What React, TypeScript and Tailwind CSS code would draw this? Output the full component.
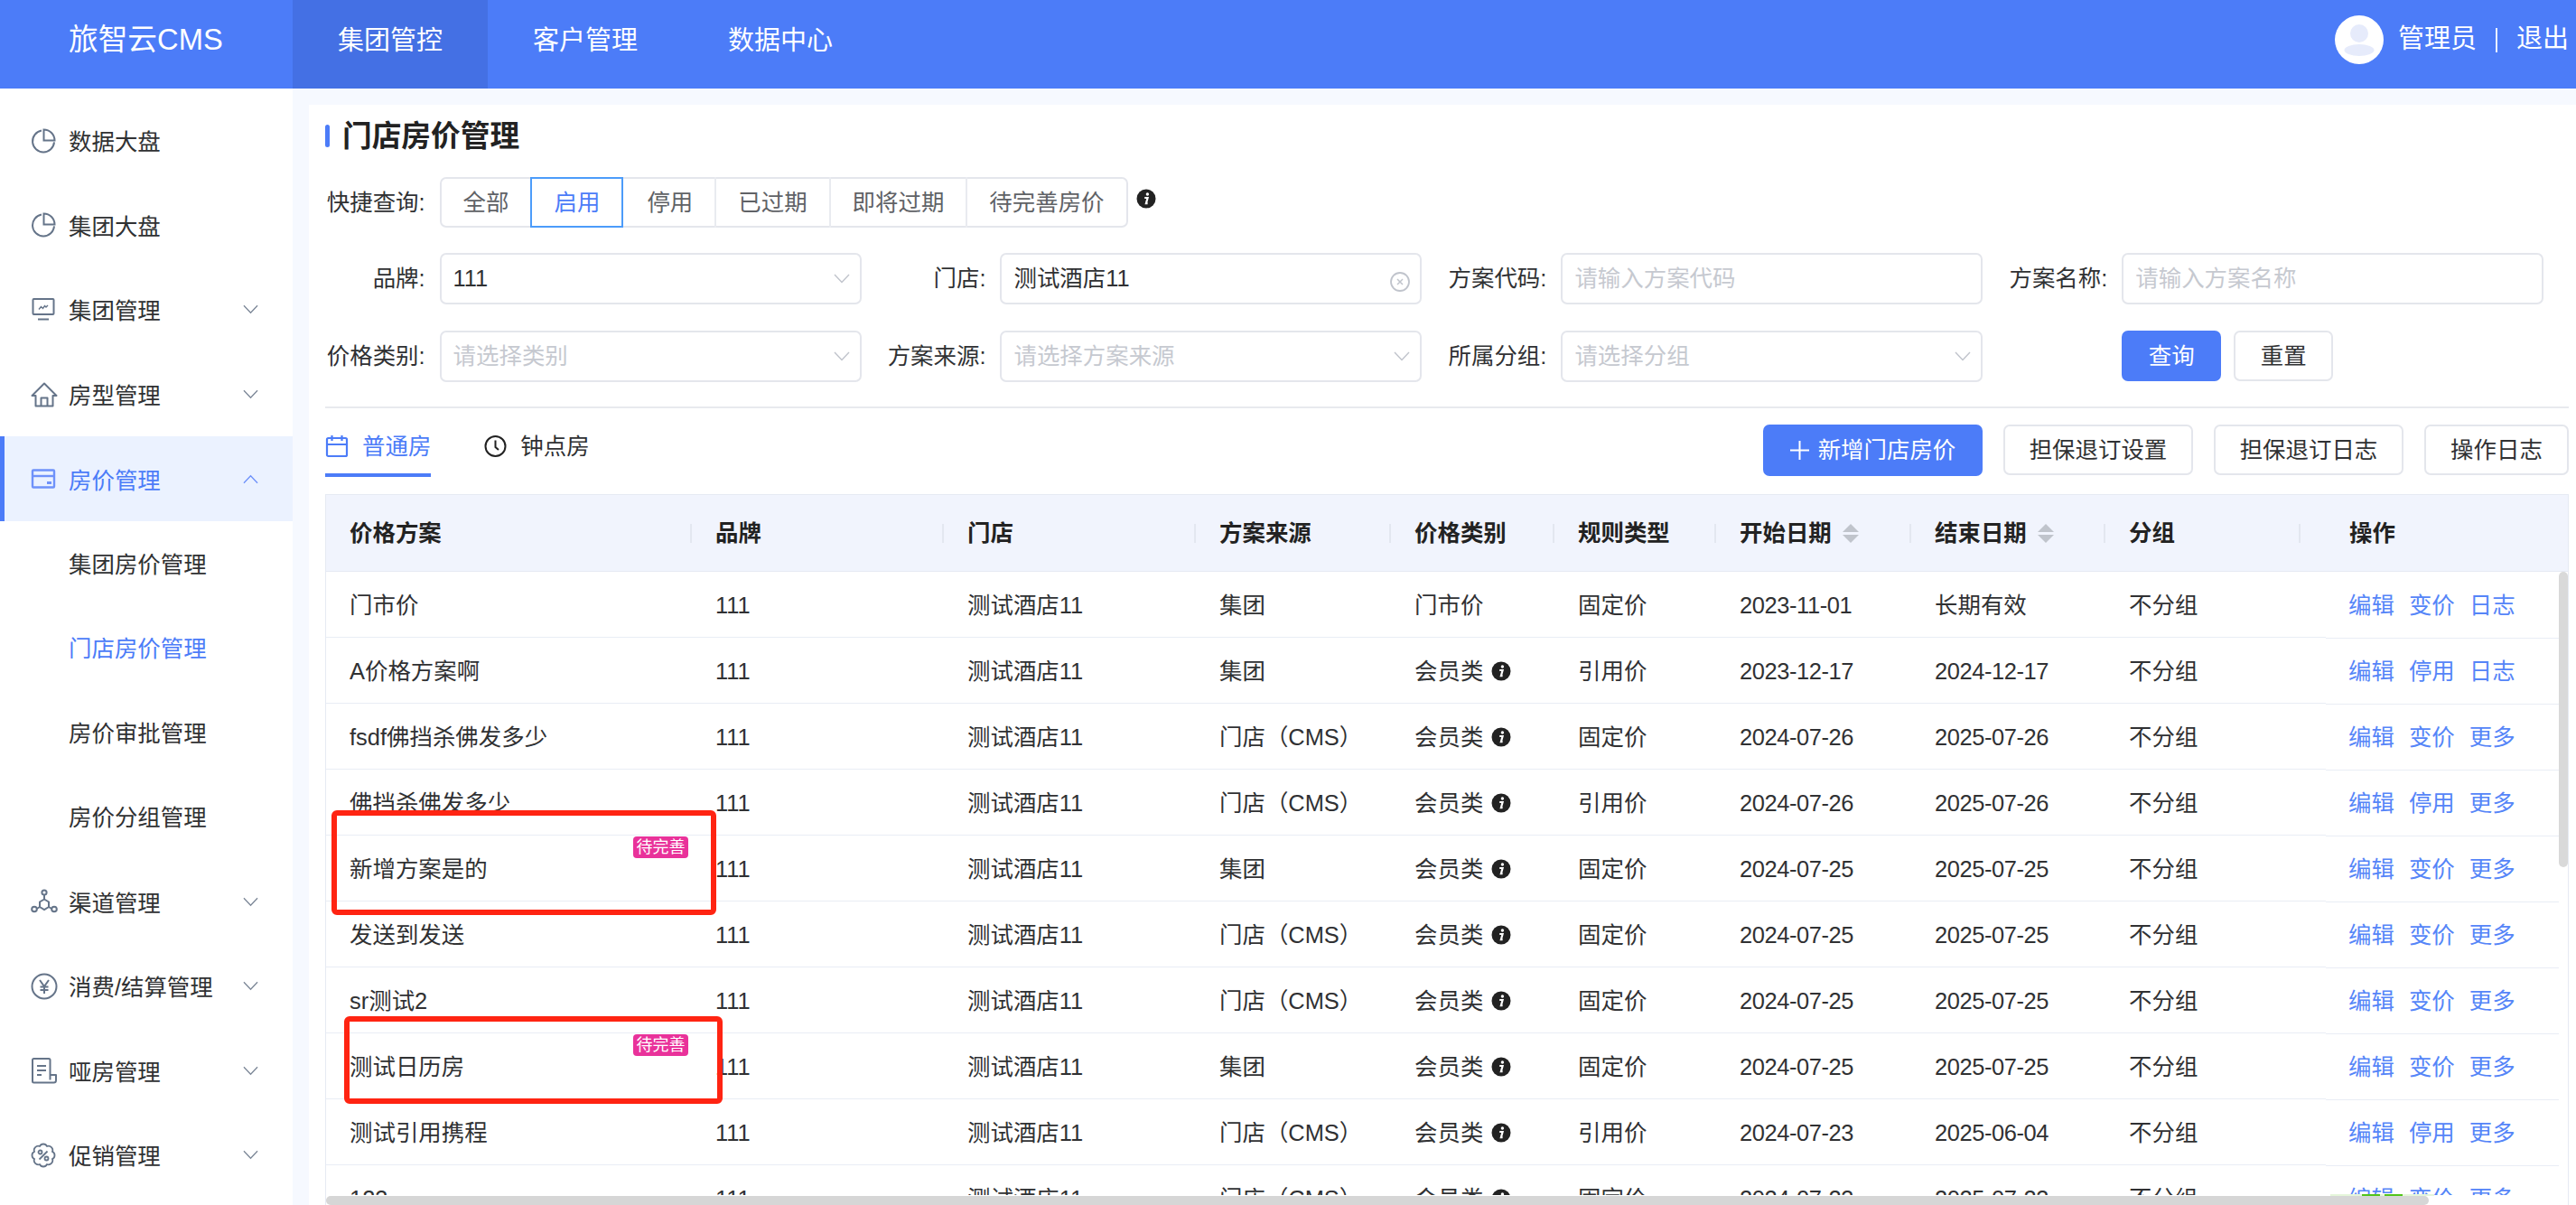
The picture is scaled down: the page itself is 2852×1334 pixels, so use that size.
import type { ReactNode } from "react";

// sidebar + header icons
const ink = "#657489";

function Pie() {
  return (
    <svg width="28" height="28" viewBox="0 0 28 28" fill="none" stroke={ink} strokeWidth="2">
      <path d="M12 2.6A12 12 0 1 0 26 15.4" />
      <path d="M14.5 1.5A12 12 0 0 1 26.5 13.5H14.5Z" />
    </svg>
  );
}

function Monitor() {
  return (
    <svg width="28" height="28" viewBox="0 0 28 28" fill="none" stroke={ink} strokeWidth="2">
      <rect x="2.5" y="2" width="23" height="17" rx="1" />
      <path d="M8 24.5h12" />
      <path d="M9 13.5l2.5-3 2 2 2-3 1.5 1.5 2-2" strokeWidth="1.4" />
    </svg>
  );
}

function HomeIcon() {
  return (
    <svg width="30" height="28" viewBox="0 0 30 28" fill="none" stroke={ink} strokeWidth="2" strokeLinejoin="round">
      <path d="M15 1.5L1.5 15H5.5V26.5H24.5V15H28.5Z" />
      <path d="M11.5 26.5V17.5H18.5V26.5" />
    </svg>
  );
}

function CardIcon() {
  return (
    <svg width="28" height="24" viewBox="0 0 28 24" fill="none" stroke="#6f92fa" strokeWidth="2.4">
      <rect x="2" y="2.5" width="24" height="19" rx="1" />
      <path d="M2 9h24" />
      <path d="M18 16.5h5" strokeWidth="3" />
    </svg>
  );
}

function Channel() {
  return (
    <svg width="30" height="28" viewBox="0 0 30 28" fill="none" stroke={ink} strokeWidth="2">
      <circle cx="15" cy="4" r="2.6" />
      <circle cx="4" cy="22.5" r="2.8" />
      <circle cx="26" cy="22.5" r="2.8" />
      <path d="M15 6.6V11.5L20 14.5V20L15 23L10 20V14.5L15 11.5" />
      <path d="M6.8 22L10 20M23.2 22L20 20" />
    </svg>
  );
}

function Yen() {
  return (
    <svg width="30" height="30" viewBox="0 0 30 30" fill="none" stroke={ink} strokeWidth="2">
      <circle cx="15" cy="15" r="13.5" />
      <path d="M10 8l5 7 5-7M15 15v8M10.5 15.5h9M10.5 19h9" />
    </svg>
  );
}

function Doc() {
  return (
    <svg width="30" height="30" viewBox="0 0 30 30" fill="none" stroke={ink} strokeWidth="2" strokeLinejoin="round">
      <path d="M21.5 23V3.5A1.5 1.5 0 0 0 20 2H3.5A1.5 1.5 0 0 0 2 3.5V27A1.5 1.5 0 0 0 3.5 28.5H25.5C27 28.5 28 27.5 28 26V20H21.5V25.5" />
      <path d="M7 10h10M7 15h10M7 20h5" />
    </svg>
  );
}

function Promo() {
  // scalloped badge
  const c = 14;
  const pts = Array.from({ length: 8 }, (_, i) => {
    const a = (Math.PI / 4) * i + Math.PI / 8;
    return [c + 10.8 * Math.cos(a), c + 10.8 * Math.sin(a)];
  });
  const d =
    `M${pts[0][0].toFixed(1)} ${pts[0][1].toFixed(1)}` +
    pts
      .slice(1)
      .concat([pts[0]])
      .map((p) => `A4.6 4.6 0 0 1 ${p[0].toFixed(1)} ${p[1].toFixed(1)}`)
      .join("") +
    "Z";
  return (
    <svg width="28" height="28" viewBox="0 0 28 28" fill="none" stroke={ink} strokeWidth="1.8">
      <path d={d} />
      <circle cx="10.5" cy="10.5" r="2" />
      <circle cx="17.5" cy="17.5" r="2" />
      <path d="M18.5 9.5L9.5 18.5" />
    </svg>
  );
}

function Chevron({ up, color = "#7d8898", w = 18 }: { up?: boolean; color?: string; w?: number }) {
  return (
    <svg width={w} height="11" viewBox="0 0 18 11" fill="none" stroke={color} strokeWidth="1.4">
      <path d={up ? "M1 10L9 1.5L17 10" : "M1 1L9 9.5L17 1"} />
    </svg>
  );
}

function Info() {
  return (
    <svg width="22" height="22" viewBox="0 0 22 22" className="shrink-0">
      <circle cx="11" cy="11" r="10.5" fill="#222" />
      <circle cx="12.4" cy="6" r="1.7" fill="#fff" />
      <path d="M9.2 10H12.6L10.9 16.2H12.6" fill="none" stroke="#fff" strokeWidth="2.2" />
    </svg>
  );
}

function Sort() {
  return (
    <svg width="18" height="21" viewBox="0 0 18 21" className="ml-[12px] shrink-0" fill="#c0c4cc">
      <path d="M9 0L18 9H0Z" />
      <path d="M0 12H18L9 21Z" />
    </svg>
  );
}

type MenuItem = { label: string; icon?: ReactNode; arrow?: "down" | "up"; active?: boolean; sub?: boolean };

const menu: MenuItem[] = [
  { label: "数据大盘", icon: <Pie /> },
  { label: "集团大盘", icon: <Pie /> },
  { label: "集团管理", icon: <Monitor />, arrow: "down" },
  { label: "房型管理", icon: <HomeIcon />, arrow: "down" },
  { label: "房价管理", icon: <CardIcon />, arrow: "up", active: true },
  { label: "集团房价管理", sub: true },
  { label: "门店房价管理", sub: true, active: true },
  { label: "房价审批管理", sub: true },
  { label: "房价分组管理", sub: true },
  { label: "渠道管理", icon: <Channel />, arrow: "down" },
  { label: "消费/结算管理", icon: <Yen />, arrow: "down" },
  { label: "哑房管理", icon: <Doc />, arrow: "down" },
  { label: "促销管理", icon: <Promo />, arrow: "down" },
];

function Sidebar() {
  return (
    <aside className="w-[324px] shrink-0 bg-white pt-[11px]">
      {menu.map((m) => {
        if (m.sub) {
          return (
            <div
              key={m.label}
              className={`flex h-[93.6px] items-center pl-[76px] pt-[2px] ${m.active ? "text-[#4c7cf8]" : "text-[#303133]"}`}
            >
              {m.label}
            </div>
          );
        }
        return (
          <div
            key={m.label}
            className={`flex h-[93.6px] items-center pr-[38px] ${
              m.active ? "border-l-[5px] border-[#4c7cf8] bg-[#ebf2ff] pl-[29px] text-[#4c7cf8]" : "pl-[34px] text-[#303133]"
            }`}
          >
            <span className="flex w-[42px] shrink-0 justify-start">{m.icon}</span>
            <span className="flex-1 pt-[3px]">{m.label}</span>
            {m.arrow && <Chevron up={m.arrow === "up"} color={m.active ? "#6f92fa" : "#7d8898"} w={17} />}
          </div>
        );
      })}
    </aside>
  );
}

function Header() {
  return (
    <header className="flex h-[98px] shrink-0 bg-[#4c7cf8] text-white">
      <div className="flex w-[324px] items-center pb-[11px] pl-[76px] text-[32.7px]">旅智云CMS</div>
      <nav className="flex text-[29px]">
        <div className="flex w-[216px] items-center justify-center bg-[#4470e4] pb-[6px]">集团管控</div>
        <div className="flex w-[216px] items-center justify-center pb-[6px]">客户管理</div>
        <div className="flex w-[216px] items-center justify-center pb-[6px]">数据中心</div>
      </nav>
      <div className="ml-auto flex items-center pb-[10px] pr-[8px] text-[29px]">
        <svg width="54" height="54" viewBox="0 0 54 54" className="mr-[16px]">
          <circle cx="27" cy="27" r="27" fill="#fff" />
          <ellipse cx="27" cy="20" rx="10" ry="10" fill="#e6ebfb" />
          <ellipse cx="27" cy="38.5" rx="16.5" ry="6.5" fill="#e6ebfb" />
        </svg>
        <span>管理员</span>
        <span className="mx-[21px] h-[27px] w-[2px] bg-white/90" />
        <span>退出</span>
      </div>
    </header>
  );
}

const quick = ["全部", "启用", "停用", "已过期", "即将过期", "待完善房价"];

function QuickFilter() {
  return (
    <div className="mt-[28px] flex h-[56px] items-center">
      <div className="w-[110.6px] shrink-0 text-right text-[#303133]">快捷查询:</div>
      <div className="ml-[16px] flex h-full rounded-[7px] border-2 border-[#e4e6ec]">
        {quick.map((q, i) => (
          <div
            key={q}
            className={`-my-[2px] flex items-center px-[24px] ${
              q === "启用"
                ? "border-2 border-[#4c9cfa] text-[#4c7cf8]"
                : `text-[#606266] ${i > 2 ? "border-l-2 border-[#e9ebf0]" : i === 2 ? "border-l-2 border-transparent" : ""}`
            }`}
          >
            {q}
          </div>
        ))}
      </div>
      <span className="-mt-[8px] ml-[9px]">
        <Info />
      </span>
    </div>
  );
}

function Field({
  label,
  value,
  placeholder,
  icon,
}: {
  label: string;
  value?: string;
  placeholder?: string;
  icon?: "chevron" | "clear";
}) {
  return (
    <div className="flex h-[57px] w-[593.6px] shrink-0 items-center">
      <div className="w-[110.6px] shrink-0 text-right whitespace-nowrap text-[#303133]">{label}</div>
      <div className="ml-[16px] flex h-full flex-1 items-center justify-between rounded-[7px] border-2 border-[#e4e6ec] pl-[13px] pr-[11px]">
        {value ? <span className="text-[#303133]">{value}</span> : <span className="text-[#c6c9d0]">{placeholder}</span>}
        {icon === "chevron" && <Chevron color="#c0c4cc" />}
        {icon === "clear" && (
          <svg width="22" height="22" viewBox="0 0 22 22" fill="none" stroke="#c0c4cc" className="mt-[6px]">
            <circle cx="11" cy="11" r="10" strokeWidth="1.8" />
            <path d="M8 8l6 6M14 8l-6 6" strokeWidth="1.5" />
          </svg>
        )}
      </div>
    </div>
  );
}

function Filters() {
  return (
    <div className="mt-[28px] flex flex-col gap-[29px]">
      <div className="flex gap-[27.3px]">
        <Field label="品牌:" value="111" icon="chevron" />
        <Field label="门店:" value="测试酒店11" icon="clear" />
        <Field label="方案代码:" placeholder="请输入方案代码" />
        <Field label="方案名称:" placeholder="请输入方案名称" />
      </div>
      <div className="flex gap-[27.3px]">
        <Field label="价格类别:" placeholder="请选择类别" icon="chevron" />
        <Field label="方案来源:" placeholder="请选择方案来源" icon="chevron" />
        <Field label="所属分组:" placeholder="请选择分组" icon="chevron" />
        <div className="ml-[126.6px] flex h-[56px] gap-[14px]">
          <button className="h-full w-[110px] rounded-[7px] bg-[#4c7cf8] text-white">查询</button>
          <button className="h-full w-[110px] rounded-[7px] border-2 border-[#e4e6ec] text-[#303133]">重置</button>
        </div>
      </div>
    </div>
  );
}

function Toolbar() {
  return (
    <div className="mt-[18px] flex h-[58px] shrink-0 items-start justify-between">
      <div className="flex h-full">
        <div className="flex h-full items-start gap-[15px] border-b-[4px] border-[#4c7cf8] pt-[5px] text-[#4c7cf8]">
          <svg width="26" height="26" viewBox="0 0 26 26" fill="none" stroke="#4c7cf8" strokeWidth="2.2" className="mt-[6px]">
            <rect x="2" y="4" width="22" height="20" rx="1.5" />
            <path d="M2 11h22M7.5 1v6M18.5 1v6" />
          </svg>
          普通房
        </div>
        <div className="ml-[59px] flex h-full items-start gap-[15px] pt-[5px] text-[#303133]">
          <svg width="25" height="26" viewBox="0 0 25 26" fill="none" stroke="#222" strokeWidth="2" className="mt-[6px]">
            <circle cx="12.5" cy="13" r="11" />
            <path d="M12.5 6.5V14L16 17" />
          </svg>
          钟点房
        </div>
      </div>
      <div className="flex gap-[23px]">
        <button className="flex h-[57px] w-[243px] items-center justify-center gap-[10px] rounded-[7px] bg-[#4c7cf8] text-white">
          <svg width="21" height="21" viewBox="0 0 21 21" stroke="#fff" strokeWidth="2">
            <path d="M10.5 0V21M0 10.5H21" />
          </svg>
          新增门店房价
        </button>
        <button className="h-[56px] w-[210px] rounded-[7px] border-2 border-[#e4e6ec] text-[#303133]">担保退订设置</button>
        <button className="h-[56px] w-[210px] rounded-[7px] border-2 border-[#e4e6ec] text-[#303133]">担保退订日志</button>
        <button className="h-[56px] w-[160px] rounded-[7px] border-2 border-[#e4e6ec] text-[#303133]">操作日志</button>
      </div>
    </div>
  );
}

type Row = {
  name: string;
  source: "集团" | "门店（CMS）";
  kind: string;
  rule: string;
  start: string;
  end: string;
  ops: string[];
  pending?: boolean;
};

const rows: Row[] = [
  { name: "门市价", source: "集团", kind: "门市价", rule: "固定价", start: "2023-11-01", end: "长期有效", ops: ["编辑", "变价", "日志"] },
  { name: "A价格方案啊", source: "集团", kind: "会员类", rule: "引用价", start: "2023-12-17", end: "2024-12-17", ops: ["编辑", "停用", "日志"] },
  { name: "fsdf佛挡杀佛发多少", source: "门店（CMS）", kind: "会员类", rule: "固定价", start: "2024-07-26", end: "2025-07-26", ops: ["编辑", "变价", "更多"] },
  { name: "佛挡杀佛发多少", source: "门店（CMS）", kind: "会员类", rule: "引用价", start: "2024-07-26", end: "2025-07-26", ops: ["编辑", "停用", "更多"] },
  { name: "新增方案是的", source: "集团", kind: "会员类", rule: "固定价", start: "2024-07-25", end: "2025-07-25", ops: ["编辑", "变价", "更多"], pending: true },
  { name: "发送到发送", source: "门店（CMS）", kind: "会员类", rule: "固定价", start: "2024-07-25", end: "2025-07-25", ops: ["编辑", "变价", "更多"] },
  { name: "sr测试2", source: "门店（CMS）", kind: "会员类", rule: "固定价", start: "2024-07-25", end: "2025-07-25", ops: ["编辑", "变价", "更多"] },
  { name: "测试日历房", source: "集团", kind: "会员类", rule: "固定价", start: "2024-07-25", end: "2025-07-25", ops: ["编辑", "变价", "更多"], pending: true },
  { name: "测试引用携程", source: "门店（CMS）", kind: "会员类", rule: "引用价", start: "2024-07-23", end: "2025-06-04", ops: ["编辑", "停用", "更多"] },
  { name: "123", source: "门店（CMS）", kind: "会员类", rule: "固定价", start: "2024-07-23", end: "2025-07-23", ops: ["编辑", "变价", "更多"] },
];

const cols = "grid grid-cols-[405px_279px_279px_216px_181px_179px_216px_215px_244px_258px]";
const cell = "flex h-[73px] items-center border-b border-[#e9edf5] pl-[26px] pt-[2px]";

function HeadCell({ children, sep = true, sort, wide }: { children: ReactNode; sep?: boolean; sort?: boolean; wide?: boolean }) {
  return (
    <div className="flex h-full items-center pl-[26px]">
      <span>{children}</span>
      {sort && <Sort />}
      {sep && <span className={`ml-auto h-[21px] w-[2px] bg-[#e3e7f0] ${wide ? "mr-[28px]" : ""}`} />}
    </div>
  );
}

function PriceTable() {
  return (
    <div className="relative mt-[19px] min-h-0 flex-1 overflow-hidden border-x border-t border-[#e6eaf3]">
      <div className={`${cols} h-[85px] border-b border-[#e6eaf3] bg-[#f1f4fd] font-bold text-[#222]`}>
        <HeadCell>价格方案</HeadCell>
        <HeadCell>品牌</HeadCell>
        <HeadCell>门店</HeadCell>
        <HeadCell>方案来源</HeadCell>
        <HeadCell>价格类别</HeadCell>
        <HeadCell>规则类型</HeadCell>
        <HeadCell sort>开始日期</HeadCell>
        <HeadCell sort>结束日期</HeadCell>
        <HeadCell wide>分组</HeadCell>
        <HeadCell sep={false}>操作</HeadCell>
      </div>
      <div className="h-[690px] overflow-hidden text-[#303133]">
        {rows.map((r) => (
          <div key={r.name} className={`${cols} h-[73px] items-start`}>
            <div className={`${cell} relative`}>
              {r.name}
              {r.pending && (
                <span className="absolute right-[4px] top-[1px] flex h-[24px] w-[61px] items-center justify-center rounded-[4px] bg-[#e9329a] text-[18px] text-white">
                  待完善
                </span>
              )}
            </div>
            <div className={cell}>111</div>
            <div className={cell}>测试酒店11</div>
            <div className={cell}>{r.source}</div>
            <div className={`${cell} gap-[9px]`}>
              {r.kind}
              {r.kind === "会员类" && <Info />}
            </div>
            <div className={cell}>{r.rule}</div>
            <div className={`${cell} tracking-[-0.4px]`}>{r.start}</div>
            <div className={`${cell} ${r.end.startsWith("2") ? "tracking-[-0.4px]" : ""}`}>{r.end}</div>
            <div className={cell}>不分组</div>
            <div className="flex h-[74px] items-center gap-[16px] border-b border-[#e9edf5] pl-[25px] pt-[2px] text-[#5585f8]">
              {r.ops.map((op) => (
                <span key={op}>{op}</span>
              ))}
            </div>
          </div>
        ))}
      </div>
      {/* scrollbars sit on top of the rows */}
      <div className="absolute right-0 top-[85px] h-[327px] w-[10px] rounded-[5px] bg-[#d9d9d9]" />
      <div className="absolute bottom-0 left-0 h-[10.5px] w-[2328px] rounded-[5px] bg-[#d6d6d6]" />
    </div>
  );
}

export default function App() {
  return (
    <div
      className="relative flex h-[1334px] w-[2852px] flex-col overflow-hidden bg-[#f6f9ff] text-[25.45px]"
      style={{ fontFamily: '"Liberation Sans", "Noto Sans CJK SC", sans-serif' }}
    >
      <Header />
      <div className="flex min-h-0 flex-1">
        <Sidebar />
        <main className="ml-[18px] mt-[18px] flex min-w-0 flex-1 flex-col bg-white pl-[18px] pr-[8px] pt-[16px]">
          <div className="flex h-[36px] shrink-0 items-center">
            <span className="h-[25px] w-[5px] rounded-[3px] bg-[#4c7cf8]" />
            <h1 className="ml-[14px] pt-[2px] text-[32.7px] font-bold text-[#222]">门店房价管理</h1>
          </div>
          <QuickFilter />
          <Filters />
          <div className="mt-[27px] h-[2px] w-full shrink-0 bg-[#e8eaee]" />
          <Toolbar />
          <PriceTable />
        </main>
      </div>

      {/* red annotation boxes and the toast sliver drawn over the table */}
      <div className="absolute left-[367px] top-[897px] h-[116px] w-[426px] rounded-[6px] border-[6px] border-[#ff2412]" />
      <div className="absolute left-[381px] top-[1125px] h-[97px] w-[419px] rounded-[6px] border-[6px] border-[#ff2412]" />
      <div className="absolute left-[2580px] top-[1322px] flex h-[2px] w-[115px] justify-center gap-[5px] bg-[#e5f6da]">
        <span className="h-full w-[20px] bg-[#52c41a]" />
        <span className="h-full w-[20px] bg-[#52c41a]" />
      </div>
    </div>
  );
}
